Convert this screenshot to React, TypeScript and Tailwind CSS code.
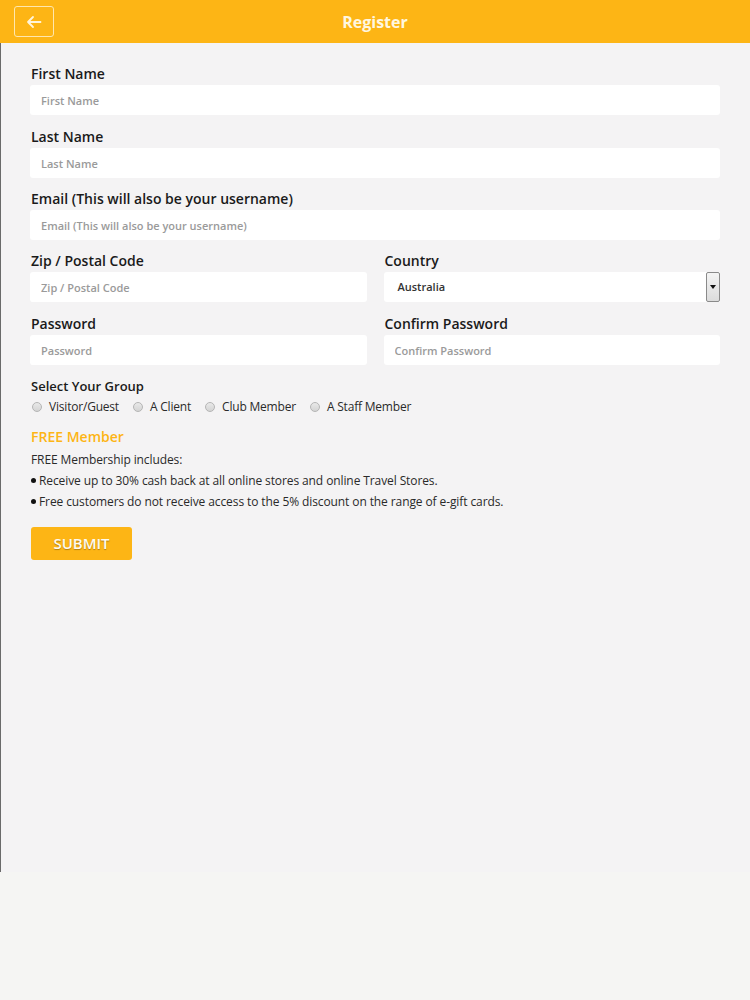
import React from "react";

const labelCls = "block text-[14px] font-semibold text-[#1a1a1a] leading-[18px] mb-[2px] pl-[1px]";
const inputCls =
  "w-full h-[30px] bg-white rounded-[3px] px-[11px] text-[11px] font-semibold text-[#333] placeholder:text-[#9a9a9a] outline-none border-0";

function Field({ label, ph, mb = "mb-[13px]" }: { label: string; ph: string; mb?: string }) {
  return (
    <div className={mb}>
      <label className={labelCls}>{label}</label>
      <input className={inputCls} placeholder={ph} />
    </div>
  );
}

function Radio({ label }: { label: string }) {
  return (
    <label className="flex items-center gap-[7px] mr-[14px]">
      <span className="w-[10px] h-[10px] rounded-full border border-[#b5b5b5] bg-gradient-to-b from-[#e9e9e9] to-[#d4d4d4]" />
      <span className="text-[12px] text-[#2a2a2a] tracking-[-0.2px]">{label}</span>
    </label>
  );
}

export default function App() {
  return (
    <div className="w-[750px] min-h-[1000px] bg-[#f5f5f3]" style={{ fontFamily: '"Open Sans", sans-serif' }}>
      <div className="min-h-[872px] bg-[#f4f3f4] border-l border-[#6a6a6a]">
        <header className="h-[43px] bg-[#fdb515] flex items-center relative -ml-[1px]">
          <button className="absolute left-[14px] top-[6px] w-[40px] h-[31px] border border-[#ffe7ad] rounded-[3px] flex items-center justify-center">
            <svg width="16" height="14" viewBox="0 0 16 14" fill="none" stroke="#fff5dc" strokeWidth="1.8" strokeLinecap="round" strokeLinejoin="round">
              <path d="M14.5 7H2M7 2L2 7l5 5" />
            </svg>
          </button>
          <h1 className="w-full text-center text-[16px] font-bold text-[#fff7e0]">Register</h1>
        </header>

        <div className="pl-[29px] pr-[30px] pt-[22px]">
          <Field label="First Name" ph="First Name" mb="mb-[13px]" />
          <Field label="Last Name" ph="Last Name" mb="mb-[12px]" />
          <Field label="Email (This will also be your username)" ph="Email (This will also be your username)" mb="mb-[12px]" />
          <div className="grid grid-cols-2 gap-x-[17px]">
            <Field label="Zip / Postal Code" ph="Zip / Postal Code" mb="mb-[13px]" />
            <div className="mb-[13px]">
              <label className={labelCls}>Country</label>
              <div className="flex h-[30px] bg-white rounded-l-[3px]">
                <div className="flex-1 flex items-center pl-[14px] text-[11px] font-semibold text-[#333]">Australia</div>
                <div className="w-[14px] h-[30px] border border-[#8a8a8a] rounded-[2px] bg-gradient-to-b from-[#f4f4f4] to-[#dcdcdc] flex items-center justify-center">
                  <svg width="6" height="4" viewBox="0 0 6 4"><path d="M0 0h6L3 4z" fill="#111" /></svg>
                </div>
              </div>
            </div>
            <Field label="Password" ph="Password" />
            <Field label="Confirm Password" ph="Confirm Password" />
          </div>

          <div className="pl-[1px]">
            <div className="text-[13px] font-semibold text-[#1a1a1a] leading-[18px] -mt-[1px]">Select Your Group</div>
            <div className="flex items-center mt-[3px] pl-[1px]">
              <Radio label="Visitor/Guest" />
              <Radio label="A Client" />
              <Radio label="Club Member" />
              <Radio label="A Staff Member" />
            </div>
            <div className="mt-[11px] text-[14px] font-semibold text-[#fdb515] leading-[20px]">FREE Member</div>
            <div className="mt-[2px] text-[12px] text-[#2a2a2a] leading-[21px] tracking-[-0.1px]">FREE Membership includes:</div>
            <ul className="text-[12px] text-[#2a2a2a] leading-[21px] tracking-[-0.1px]">
              <li className="flex items-center gap-[3px]"><span className="w-[5px] h-[5px] rounded-full bg-[#111]" />Receive up to 30% cash back at all online stores and online Travel Stores.</li>
              <li className="flex items-center gap-[3px]"><span className="w-[5px] h-[5px] rounded-full bg-[#111]" />Free customers do not receive access to the 5% discount on the range of e-gift cards.</li>
            </ul>
            <button className="mt-[15px] w-[101px] h-[33px] bg-[#fdb515] rounded-[3px] text-[15px] font-semibold text-[#fffaf0] [text-shadow:0_1px_1px_rgba(0,0,0,0.3)]">SUBMIT</button>
          </div>
        </div>
      </div>
    </div>
  );
}
